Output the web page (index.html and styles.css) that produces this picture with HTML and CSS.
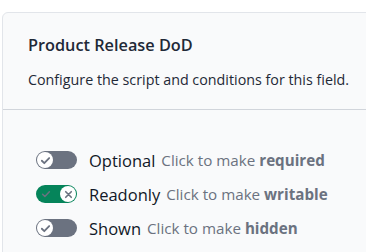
FILE: index.html
```html
<!DOCTYPE html>
<html>
<head>
<meta charset="utf-8">
<link rel="stylesheet" href="styles.css">
</head>
<body>
<div class="card">
  <div class="card-header">
    <h2 class="title">Product Release DoD</h2>
    <p class="subtitle">Configure the script and conditions for this field.</p>
  </div>
  <div class="card-body">
    <ul class="toggles">
      <li class="row">
        <span class="toggle off">
          <span class="knob"><svg viewBox="0 0 16 16" width="13" height="13"><path d="M3.5 8.3l3 3 6-6.3" fill="none" stroke="#6b7280" stroke-width="2.2" stroke-linecap="round" stroke-linejoin="round"/></svg></span>
        </span>
        <span class="label">Optional</span>
        <span class="hint">Click to make <b>required</b></span>
      </li>
      <li class="row">
        <span class="toggle on">
          <svg class="track-check" viewBox="0 0 16 16" width="12" height="12"><path d="M3.5 8.3l3 3 6-6.3" fill="none" stroke="#6b7280" stroke-width="2" stroke-linecap="round" stroke-linejoin="round"/></svg>
          <span class="knob"><svg viewBox="0 0 16 16" width="11" height="11"><path d="M4 4l8 8M12 4l-8 8" fill="none" stroke="#6b7280" stroke-width="2.4" stroke-linecap="round"/></svg></span>
        </span>
        <span class="label">Readonly</span>
        <span class="hint">Click to make <b>writable</b></span>
      </li>
      <li class="row">
        <span class="toggle off">
          <span class="knob"><svg viewBox="0 0 16 16" width="13" height="13"><path d="M3.5 8.3l3 3 6-6.3" fill="none" stroke="#6b7280" stroke-width="2.2" stroke-linecap="round" stroke-linejoin="round"/></svg></span>
        </span>
        <span class="label">Shown</span>
        <span class="hint">Click to make <b>hidden</b></span>
      </li>
    </ul>
  </div>
</div>
</body>
</html>
```

FILE: styles.css
```css
html, body {
  margin: 0;
  padding: 0;
  background: #ffffff;
  overflow: hidden;
  font-family: "Open Sans", "Noto Sans", sans-serif;
}
.card {
  margin: 12px 0 0 2px;
  width: 420px;
  height: 300px;
  background: #f9fafb;
  border: 1px solid #e2e5ea;
  border-radius: 6px 6px 0 0;
}
.card-header {
  padding: 20px 24px 19px 25px;
  border-bottom: 1px solid #d1d5db;
}
.title {
  margin: 0;
  font-size: 16.3px;
  line-height: 24px;
  font-weight: 600;
  color: #1f2937;
}
.subtitle {
  margin: 13px 0 0;
  font-size: 14.3px;
  line-height: 20px;
  color: #1f2937;
}
.card-body {
  padding: 36px 0 0 33px;
}
.toggles {
  list-style: none;
  margin: 0;
  padding: 0;
  display: flex;
  flex-direction: column;
  gap: 6px;
}
.row {
  display: flex;
  align-items: center;
  height: 28px;
}
.toggle {
  position: relative;
  display: inline-flex;
  align-items: center;
  width: 41px;
  height: 18px;
  border-radius: 9px;
  background: #6b7280;
  flex-shrink: 0;
  margin-right: 12px;
}
.toggle.on {
  background: #05845a;
  justify-content: flex-end;
}
.knob {
  width: 16px;
  height: 16px;
  margin: 0 1px;
  border-radius: 50%;
  background: #ffffff;
  display: inline-flex;
  align-items: center;
  justify-content: center;
}
.track-check {
  position: absolute;
  left: 4px;
  top: 3px;
}
.label {
  font-size: 16.5px;
  color: #111827;
  margin-right: 6px;
}
.hint {
  font-size: 15.2px;
  color: #6b7280;
}
.hint b {
  font-weight: 700;
}
```
